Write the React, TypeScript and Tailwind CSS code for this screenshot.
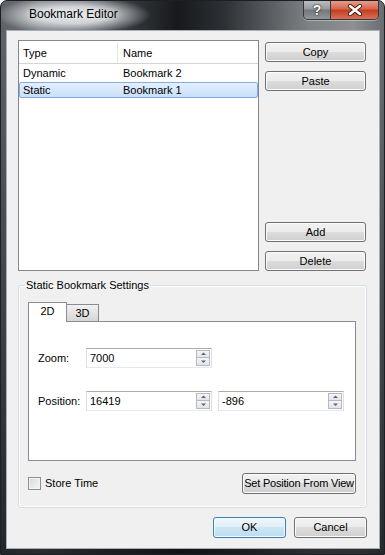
import React from "react";

const btn =
  "flex items-center justify-center rounded-[3px] border border-[#707070] bg-[linear-gradient(#f2f2f2_0%,#ebebeb_50%,#dddddd_50%,#cfcfcf_100%)] shadow-[inset_0_0_0_1px_#fcfcfc] text-[11px] leading-none text-black";

function Spin() {
  return (
    <div className="flex flex-col w-[14px] h-[16px] my-auto mr-px">
      <div className="h-[8px] flex items-center justify-center border border-[#b5b8bd] bg-[linear-gradient(#f6f6f6,#e4e4e4)]">
        <svg width="5" height="4" viewBox="0 0 5 4">
          <path d="M2.5 0.5 L5 3 L0 3 Z" fill="#4d6496" />
        </svg>
      </div>
      <div className="h-[8px] flex items-center justify-center border border-t-0 border-[#b5b8bd] bg-[linear-gradient(#f6f6f6,#e4e4e4)]">
        <svg width="5" height="4" viewBox="0 0 5 4">
          <path d="M0 0.5 L5 0.5 L2.5 3 Z" fill="#4d6496" />
        </svg>
      </div>
    </div>
  );
}

function NumBox({ value }: { value: string }) {
  return (
    <div className="w-[126px] h-[20px] flex border border-[#abadb3] border-x-[#dbdfe6] border-b-[#e3e9ef] bg-white">
      <span className="flex-1 pl-[3px] leading-[18px]">{value}</span>
      <Spin />
    </div>
  );
}

export default function App() {
  return (
    <div className="w-[385px] h-[555px] flex flex-col rounded-t-[7px] border border-[#1c1f23] overflow-hidden bg-[radial-gradient(ellipse_78px_19px_at_72px_14px,rgba(228,231,234,1),rgba(228,231,234,0.85)_45%,rgba(228,231,234,0)),linear-gradient(180deg,rgba(0,0,0,0)_0px,rgba(0,0,0,0)_30px,rgba(14,17,21,0.75)_100%),linear-gradient(90deg,#5d6165_0%,#75787c_10%,#3a3d41_32%,#17191c_46%,#2c2f33_58%,#7e8184_80%,#8d8f91_92%,#6a6d70_100%)] font-['Liberation_Sans',Arial,sans-serif] text-[11px] text-black">
      {/* title bar */}
      <div className="h-[29px] flex justify-between items-start">
        <span className="pl-[28px] pt-[6px] text-[12px] leading-[15px] [text-shadow:0_0_6px_#ffffff]">
          Bookmark Editor
        </span>
        <div className="-mt-px mr-[5px] flex h-[20px] rounded-b-[5px] border border-t-0 border-[#34373b] overflow-hidden shadow-[0_1px_0_rgba(255,255,255,0.35)]">
          <div className="w-[27px] flex items-center justify-center bg-[linear-gradient(#c0c3c6_0%,#989b9f_45%,#74777b_55%,#92959a_100%)] border-r border-[#3a3d40]">
            <span className="text-white font-bold text-[14px] leading-none [text-shadow:0_0_2px_#222,0_0_1px_#000]">
              ?
            </span>
          </div>
          <div className="w-[47px] flex items-center justify-center bg-[linear-gradient(#e8a493_0%,#d7684f_45%,#c2401f_55%,#d9705a_100%)]">
            <svg width="16" height="12" viewBox="0 0 16 12">
              <path d="M3 2 L13 10 M13 2 L3 10" stroke="#4a1c12" strokeWidth="4.2" strokeLinecap="round" />
              <path d="M3 2 L13 10 M13 2 L3 10" stroke="#ffffff" strokeWidth="2.4" strokeLinecap="round" />
            </svg>
          </div>
        </div>
      </div>

      {/* client area */}
      <div className="ml-[5px] w-[374px] h-[519px] border border-[#a9aeb3] bg-[#f0f0f0] flex flex-col pt-[9px] pl-[11px]">
        <div className="flex h-[231px]">
          <div className="w-[241px] h-full border border-[#828790] bg-white flex flex-col">
            <div className="h-[23px] pt-[2px] flex border-b border-[#d5d5d5]">
              <div className="w-[99px] pl-[4px] flex items-center border-r border-[#e5e5e5]">Type</div>
              <div className="pl-[5px] flex items-center">Name</div>
            </div>
            <div className="pt-[1px] flex flex-col">
              <div className="h-[17px] flex items-center">
                <span className="w-[100px] pl-[4px]">Dynamic</span>
                <span className="pl-[4px]">Bookmark 2</span>
              </div>
              <div className="h-[16px] flex items-center rounded-[2px] border border-[#84acdd] bg-[linear-gradient(#e4effd,#c9dffc)]">
                <span className="w-[99px] pl-[3px]">Static</span>
                <span className="pl-[4px]">Bookmark 1</span>
              </div>
            </div>
          </div>
          <div className="ml-[6px] w-[101px] flex flex-col pt-[2px]">
            <button className={`${btn} h-[20px]`}>Copy</button>
            <button className={`${btn} h-[20px] mt-[9px]`}>Paste</button>
            <div className="flex-1" />
            <button className={`${btn} h-[20px]`}>Add</button>
            <button className={`${btn} h-[20px] mt-[9px]`}>Delete</button>
          </div>
        </div>

        {/* group box */}
        <fieldset className="mt-[7px] w-[349px] rounded-[3px] border border-[#d5dfe5] shadow-[inset_0_0_0_1px_#ffffff] pl-[9px] pr-[10px] pt-[10px] pb-[13px]">
          <legend className="-ml-[3px] px-[1px] leading-[14px]">Static Bookmark Settings</legend>
          <div className="flex items-end h-[19px]">
            <div className="relative z-[1] -mb-px w-[39px] h-[20px] border border-b-0 border-[#898c95] bg-white flex items-center justify-center pb-[2px]">
              2D
            </div>
            <div className="w-[32px] h-[17px] border border-l-0 border-b-0 border-[#898c95] bg-[linear-gradient(#f2f2f2,#e3e3e3_50%,#d6d6d6)] flex items-center justify-center">
              3D
            </div>
          </div>
          <div className="w-[328px] h-[140px] border border-[#898c95] bg-white pl-[9px] pt-[26px] flex flex-col">
            <div className="flex items-center">
              <span className="w-[48px]">Zoom:</span>
              <NumBox value="7000" />
            </div>
            <div className="flex items-center mt-[23px]">
              <span className="w-[48px]">Position:</span>
              <NumBox value="16419" />
              <div className="ml-[6px]">
                <NumBox value="-896" />
              </div>
            </div>
          </div>
          <div className="mt-[12px] flex items-center justify-between">
            <div className="flex items-center">
              <div className="w-[13px] h-[13px] border border-[#8e8f8f] shadow-[inset_0_0_0_1px_#f4f4f4] bg-[linear-gradient(135deg,#d8d8d8,#f7f7f7)]" />
              <span className="ml-[4px]">Store Time</span>
            </div>
            <button className={`${btn} w-[114px] h-[21px] tracking-[-0.2px]`}>Set Position From View</button>
          </div>
        </fieldset>

        <div className="mt-[9px] flex justify-end pr-[12px] gap-[8px]">
          <button className="w-[73px] h-[21px] flex items-center justify-center rounded-[3px] border border-[#3c7fb1] bg-[linear-gradient(#eef7fd_0%,#e0eff9_50%,#cde6f5_50%,#bddcee_100%)] shadow-[inset_0_0_0_1px_#f4fbff] text-[11px] leading-none">
            OK
          </button>
          <button className={`${btn} w-[73px] h-[21px]`}>Cancel</button>
        </div>
      </div>
    </div>
  );
}
